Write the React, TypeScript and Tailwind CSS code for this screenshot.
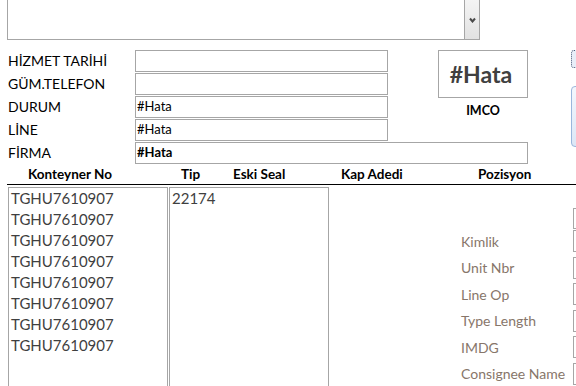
import React from "react";

const fields = [
  { label: "HİZMET TARİHİ", value: "" },
  { label: "GÜM.TELEFON", value: "" },
  { label: "DURUM", value: "#Hata" },
  { label: "LİNE", value: "#Hata" },
];

const containers = Array.from({ length: 8 }, () => "TGHU7610907");

const details = ["Kimlik", "Unit Nbr", "Line Op", "Type Length", "IMDG", "Consignee Name"];

export default function App() {
  return (
    <div
      className="relative w-[576px] h-[386px] overflow-hidden bg-white text-black"
      style={{ fontFamily: "Lato, 'Open Sans', sans-serif" }}
    >
      {/* Combo kutusu */}
      <div className="ml-[7px] flex h-[40px] w-[473px] border-x border-b border-[#a6a6a6]">
        <div className="flex-1" />
        <div className="flex w-[15px] items-center justify-center border-l border-[#a6a6a6] bg-gradient-to-b from-[#f4f4f4] to-[#e2e2e2]">
          <svg width="7" height="6" viewBox="0 0 7 6">
            <path d="M1 1.5 L3.5 4.5 L6 1.5" fill="none" stroke="#4a4a4a" strokeWidth="2" />
          </svg>
        </div>
      </div>

      {/* Üst form */}
      <div className="mt-[10px] flex h-[91px]">
        <div className="flex shrink-0 flex-col gap-[1px]">
          {fields.map((f) => (
            <div key={f.label} className="flex h-[22px] items-center">
              <span className="w-[135px] shrink-0 pl-[8px] text-[14px] leading-none">{f.label}</span>
              <div className="flex h-[22px] w-[253px] shrink-0 items-center border border-[#a6a6a6] pl-[1px] text-[13px]">
                {f.value}
              </div>
            </div>
          ))}
        </div>
        <div className="ml-[50px] flex shrink-0 flex-col items-center">
          <div className="flex h-[48px] w-[90px] items-center justify-center border border-[#a6a6a6] pr-[4px] text-[23px] font-bold text-[#404040]">
            #Hata
          </div>
          <span className="mt-[4px] text-[12.5px] font-bold">IMCO</span>
        </div>
        <div className="ml-[43px] flex w-[20px] shrink-0 flex-col">
          <div className="h-[18px] shrink-0 rounded-[3px] border border-dotted border-[#4b5c7a] bg-[#e8eef8]" />
          <div className="mt-[18px] h-[61px] shrink-0 rounded-[4px] border border-[#9ab6dc] bg-gradient-to-b from-[#f3f7fd] to-[#dce7f6]" />
        </div>
      </div>
      <div className="mt-[1px] flex h-[22px] items-center">
        <span className="w-[135px] shrink-0 pl-[8px] text-[14px] leading-none">FİRMA</span>
        <div className="flex h-[22px] w-[393px] shrink-0 items-center border border-[#a6a6a6] pl-[1px] text-[13px] font-bold">
          #Hata
        </div>
      </div>

      {/* Başlık satırı */}
      <div className="ml-[7px] mt-[1px] flex h-[20px] items-center border-b border-black text-[13.5px] font-bold">
        <span className="w-[174px] shrink-0 pl-[21px]">Konteyner No</span>
        <span className="w-[52px] shrink-0">Tip</span>
        <span className="w-[108px] shrink-0">Eski Seal</span>
        <span className="w-[137px] shrink-0">Kap Adedi</span>
        <span className="shrink-0">Pozisyon</span>
      </div>

      {/* Listeler */}
      <div className="mt-[2px] flex">
        <div className="ml-[8px] h-[220px] w-[160px] shrink-0 border border-[#a6a6a6] pl-[2px] text-[15px] leading-[21px] text-[#3f3f3f]">
          {containers.map((c, i) => (
            <div key={i}>{c}</div>
          ))}
        </div>
        <div className="ml-[1px] h-[220px] w-[160px] shrink-0 border border-[#a6a6a6] pl-[2px] text-[15px] leading-[21px] text-[#3f3f3f]">
          22174
        </div>
        <div className="ml-[132px] mt-[21px] flex shrink-0 flex-col">
          <div className="flex h-[22px]">
            <span className="w-[112px] shrink-0" />
            <div className="h-[21px] w-[20px] shrink-0 border border-[#a6a6a6]" />
          </div>
          {details.map((d) => (
            <div key={d} className="flex h-[26.5px]">
              <span className="flex h-[22px] w-[112px] shrink-0 items-center whitespace-nowrap text-[14px] text-[#87766a]">
                {d}
              </span>
              <div className="h-[22px] w-[20px] shrink-0 border border-[#a6a6a6]" />
            </div>
          ))}
        </div>
      </div>
    </div>
  );
}
